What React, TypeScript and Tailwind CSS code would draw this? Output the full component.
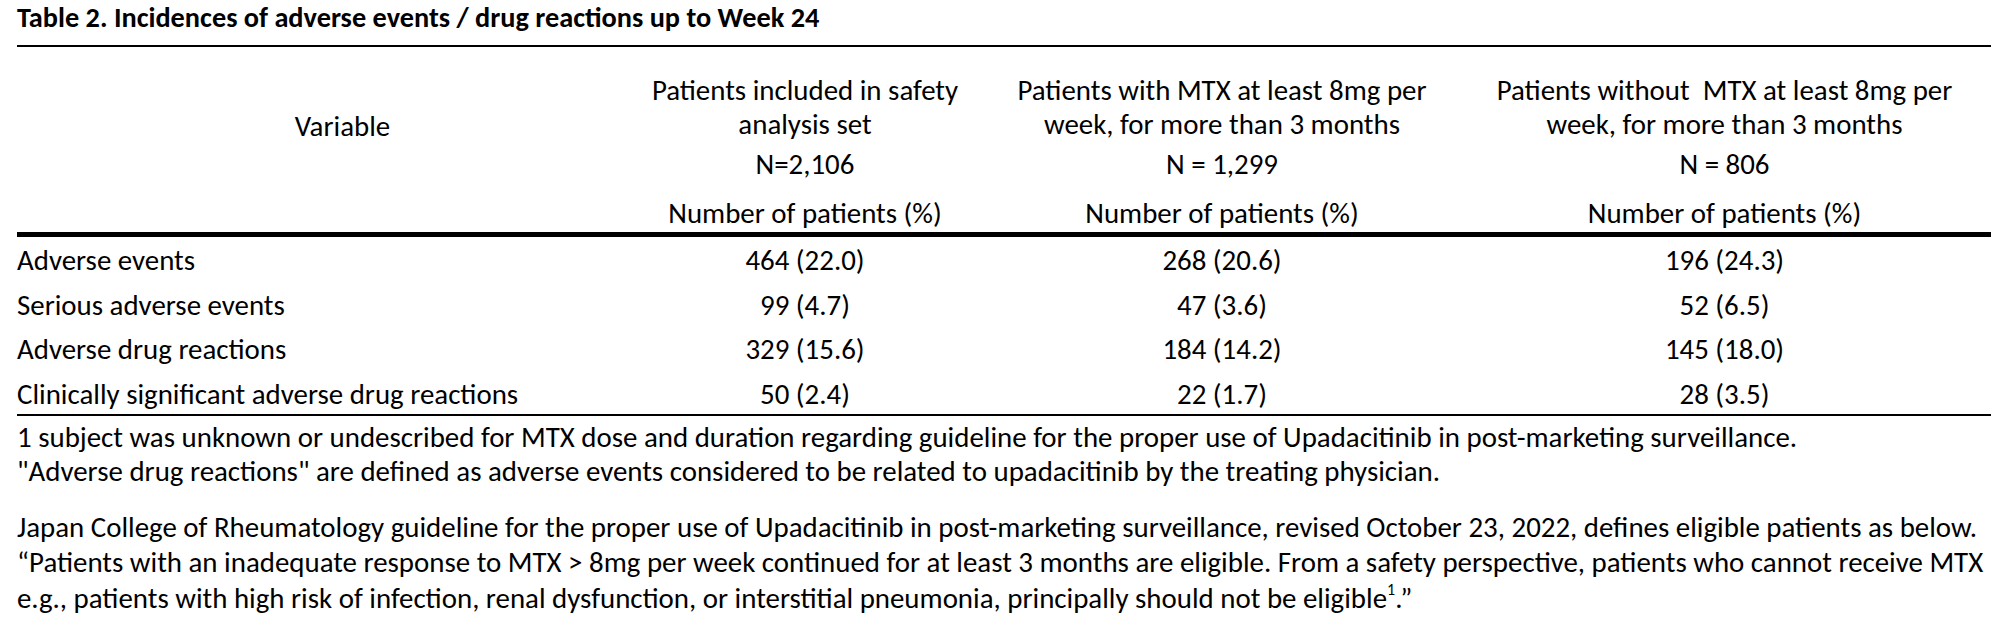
import React from "react";

const font = { fontFamily: "Carlito, Calibri, Lato, 'Liberation Sans', sans-serif" };

const rows = [
  ["Adverse events", "464 (22.0)", "268 (20.6)", "196 (24.3)"],
  ["Serious adverse events", "99 (4.7)", "47 (3.6)", "52 (6.5)"],
  ["Adverse drug reactions", "329 (15.6)", "184 (14.2)", "145 (18.0)"],
  ["Clinically significant adverse drug reactions", "50 (2.4)", "22 (1.7)", "28 (3.5)"],
];

function HeadCell({ l1, l2, l3 }: { l1: string; l2: string; l3: string }) {
  return (
    <div className="flex flex-col items-center whitespace-nowrap pt-[27px]">
      <div className="leading-[33px]">{l1}</div>
      <div className="leading-[34px]">{l2}</div>
      <div className="leading-[34px] mt-[6px]">{l3}</div>
      <div className="leading-[34px] mt-[15px]">Number of patients (%)</div>
    </div>
  );
}

export default function App() {
  return (
    <div className="w-[2000px] h-[628px] bg-white text-black pl-[17px] pr-[9px] text-[28.9px]" style={font}>
      <div className="font-bold text-[28.3px] leading-[36px] whitespace-nowrap">
        Table 2. Incidences of adverse events / drug reactions up to Week 24
      </div>
      <div className="h-[2px] bg-black mt-[9px]" />
      <div className="grid grid-cols-[607px_362px_472px_1fr] h-[185px]">
        <div className="flex justify-center pl-[44px] pt-[63px] leading-[33px]">Variable</div>
        <HeadCell l1="Patients included in safety" l2="analysis set" l3="N=2,106" />
        <HeadCell l1="Patients with MTX at least 8mg per" l2="week, for more than 3 months" l3="N = 1,299" />
        <HeadCell l1={"Patients without\u00a0 MTX at least 8mg per"} l2="week, for more than 3 months" l3="N = 806" />
      </div>
      <div className="h-[5px] bg-black" />
      <div className="pt-[5px]">
        {rows.map((r, i) => (
          <div
            key={i}
            className={`grid grid-cols-[607px_362px_472px_1fr] leading-[36px] ${i < 3 ? "h-[44.67px]" : "h-[38px]"}`}
          >
            <div className="whitespace-nowrap">{r[0]}</div>
            <div className="text-center">{r[1]}</div>
            <div className="text-center">{r[2]}</div>
            <div className="text-center">{r[3]}</div>
          </div>
        ))}
      </div>
      <div className="h-[2px] bg-black" />
      <div className="pt-[4px] leading-[34px] whitespace-nowrap">
        <div>
          1 subject was unknown or undescribed for MTX dose and duration regarding guideline for the proper use of Upadacitinib in post-marketing surveillance.
        </div>
        <div>"Adverse drug reactions" are defined as adverse events considered to be related to upadacitinib by the treating physician.</div>
      </div>
      <div className="mt-[22px] leading-[35.5px] whitespace-nowrap">
        <div>
          Japan College of Rheumatology guideline for the proper use of Upadacitinib in post-marketing surveillance, revised October 23, 2022, defines eligible patients as below.
        </div>
        <div>
          “Patients with an inadequate response to MTX &gt; 8mg per week continued for at least 3 months are eligible. From a safety perspective, patients who cannot receive MTX
        </div>
        <div>
          e.g., patients with high risk of infection, renal dysfunction, or interstitial pneumonia, principally should not be eligible
          <sup className="text-[16px] relative -top-[13px]">1</sup>.”
        </div>
      </div>
    </div>
  );
}
